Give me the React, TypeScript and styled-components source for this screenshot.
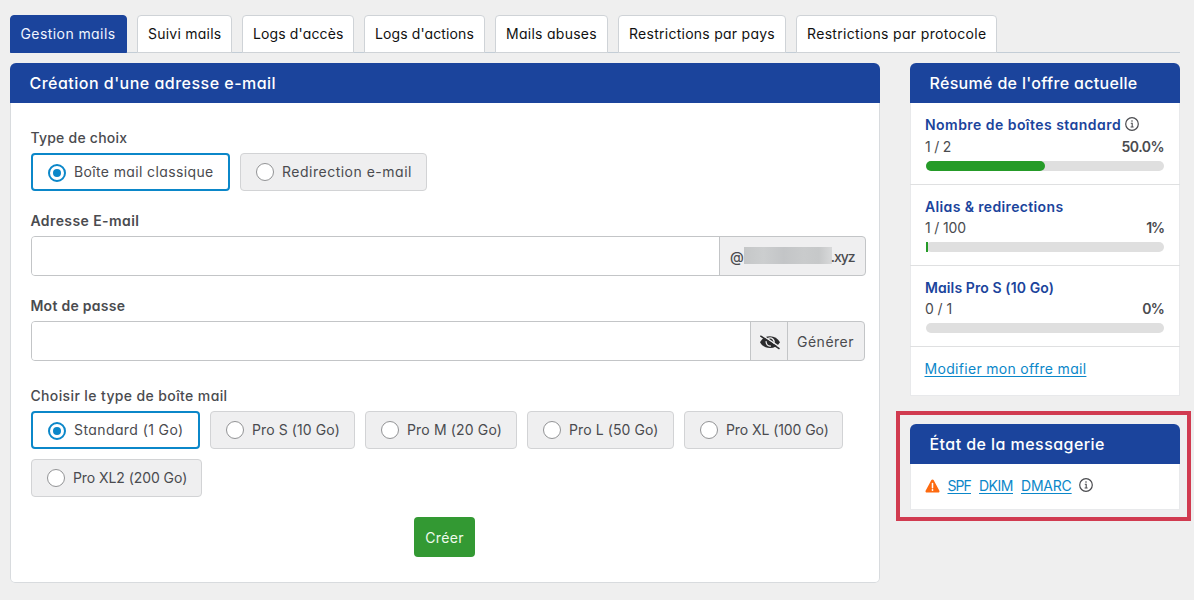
import React from 'react';
import styled, { createGlobalStyle, css } from 'styled-components';

const blue = '#1b449c';
const link = '#0b87c9';
const ink = '#4a4b4f';

const GlobalStyle = createGlobalStyle`
  *, *::before, *::after { box-sizing: border-box; }
  body {
    margin: 0;
    background: #efefef;
    color: ${ink};
    font-family: Inter, "Liberation Sans", sans-serif;
    font-size: 14px;
    line-height: 21px;
    font-feature-settings: "cv11";
  }
`;

const Page = styled.div`
  height: 600px;
  padding: 15px 14px 0 10px;
  overflow: hidden;
`;

const Text = styled.span<{ $track?: number }>`
  white-space: nowrap;
  letter-spacing: ${p => p.$track ?? 0}px;
`;

const Tabs = styled.nav`
  display: flex;
  gap: 10px;
  width: 1170px;
  height: 38px;
  border-bottom: 1px solid #c3cdd6;
`;

const Tab = styled.a<{ $active?: boolean; $width: number }>`
  display: flex;
  align-items: center;
  width: ${p => p.$width}px;
  height: 38px;
  padding: 0 0 2px 10px;
  border: 1px solid #cfd3d7;
  border-radius: 4px 4px 0 0;
  background: #fff;
  color: #111;
  ${p => p.$active && css`
    padding-left: 9.5px;
    background: ${blue};
    border-color: ${blue};
    color: #f1f5ff;
  `}
`;

const Columns = styled.div`
  display: flex;
  gap: 16px;
  align-items: flex-start;
  margin-top: 10px;
`;

const Panel = styled.section<{ $height: number; $width: number; $soft?: boolean }>`
  width: ${p => p.$width}px;
  height: ${p => p.$height}px;
  display: flex;
  flex-direction: column;
  background: #fff;
  border-radius: 6px 6px ${p => (p.$soft ? '0 0' : '5px 5px')};
  box-shadow: inset 0 0 0 1px ${p => (p.$soft ? '#e8e9eb' : '#d8dbde')};
`;

const PanelTitle = styled.h2`
  flex: none;
  display: flex;
  align-items: center;
  height: 40px;
  margin: 0;
  padding: 1px 19.5px 0;
  border-radius: 6px 6px 0 0;
  background: ${blue};
  color: #fff;
  font-size: 16px;
  font-weight: 500;
`;

const Form = styled.form`
  display: flex;
  flex-direction: column;
  padding: 24px 14px 0 21px;
`;

const Field = styled.div<{ $gap: number }>`
  display: flex;
  flex-direction: column;
  gap: 5px;
  margin-bottom: ${p => p.$gap}px;
`;

const Label = styled.div<{ $weight: number }>`
  height: 21px;
  margin-left: -0.6px;
  font-weight: ${p => p.$weight};
`;

const Options = styled.div`
  display: flex;
  flex-wrap: wrap;
  gap: 10px;
`;

const Option = styled.label<{ $checked?: boolean; $width: number }>`
  display: flex;
  align-items: flex-start;
  gap: 8px;
  width: ${p => p.$width}px;
  height: 38px;
  padding: 7px 0 0 15px;
  border: 1px solid #d2d3d5;
  border-radius: 4px;
  background: #efeff0;
  ${p => p.$checked && css`
    padding-top: 6px;
    border: 2px solid ${link};
    background: #fff;
  `}
`;

const Radio = styled.span<{ $checked?: boolean }>`
  flex: none;
  display: grid;
  place-items: center;
  width: 18px;
  height: 18px;
  margin-top: 2px;
  border: 1px solid #929395;
  border-radius: 50%;
  background: #fff;
  ${p => p.$checked && css`
    border: 2px solid ${link};
    margin-top: 3px;
    &::after {
      content: '';
      width: 8px;
      height: 8px;
      border-radius: 50%;
      background: ${link};
    }
  `}
`;

const InputGroup = styled.div<{ $width: number }>`
  display: flex;
  width: ${p => p.$width}px;
  height: 40px;
  border: 1px solid #c3c5c7;
  border-radius: 4px;
  background: #efeff0;
  overflow: hidden;
`;

const Input = styled.input`
  flex: 1;
  min-width: 0;
  padding: 0 10px;
  border: 0;
  background: #fff;
  outline: none;
`;

const Addon = styled.span<{ $width: number }>`
  display: flex;
  align-items: center;
  width: ${p => p.$width}px;
  padding: 0 0 0 10px;
  border-left: 1px solid #c3c5c7;
  font-weight: 500;
`;

const Masked = styled.span`
  width: 88px;
  height: 17px;
  margin: -2px -1px 0 0;
  background: linear-gradient(90deg, #c5c7c8, #cccecf 22%, #c3c5c7 45%, #c9cbcc 68%, #c6c8c9 85%, #d8d9da);
`;

const IconAddon = styled.button`
  display: grid;
  place-items: center;
  width: 37px;
  padding: 1px 0 0 1px;
  border: 0;
  border-left: 1px solid #c3c5c7;
  background: none;
  color: #2b2b2d;
`;

const Generate = styled.button`
  width: 77px;
  padding: 0 0 0 9px;
  border: 0;
  border-left: 1px solid #c3c5c7;
  background: none;
  color: ${ink};
  font: inherit;
  font-feature-settings: inherit;
  text-align: left;
`;

const Submit = styled.button`
  align-self: center;
  width: 61px;
  height: 40px;
  margin-right: 8px;
  padding: 0;
  border: 0;
  border-radius: 4px;
  background: #339933;
  color: #f0fbee;
  font: inherit;
  font-feature-settings: inherit;
`;

const Aside = styled.aside`
  display: flex;
  flex-direction: column;
  gap: 15px;
  padding-left: 14px;
`;

const Quota = styled.div<{ $height: number }>`
  height: ${p => p.$height}px;
  padding: 10px 16px 0 15px;
  border-bottom: 1px solid #dfe0e1;
`;

const QuotaTitle = styled.div<{ $height: number }>`
  display: flex;
  align-items: flex-start;
  gap: 4px;
  height: ${p => p.$height}px;
  line-height: 24px;
  color: ${blue};
  font-weight: 600;

  svg { margin-top: 4px; }
`;

const QuotaNumbers = styled.div`
  display: flex;
  justify-content: space-between;
  height: 21px;

  b { font-weight: 600; }
`;

const Track = styled.div`
  height: 10px;
  margin: 4px 0 0 1px;
  border-radius: 5px;
  background: #dfdfdf;
`;

const Bar = styled.div<{ $round?: boolean }>`
  height: 100%;
  border-radius: ${p => (p.$round ? 5 : 0)}px;
  background: #259b28;
`;

const Link = styled.a`
  color: ${link};
  text-decoration: underline;
  text-underline-offset: 2px;
  text-decoration-thickness: 1px;
`;

const OfferLink = styled.div`
  padding: 11px 14.5px 0;
`;

const Highlight = styled.div`
  width: 295px;
  height: 110px;
  margin-left: -14px;
  padding: 9px 10px;
  border: 4px solid #d13b50;
`;

const StatusRow = styled.div`
  display: flex;
  align-items: flex-start;
  height: 44px;
  padding: 11px 0 0 15px;

  svg { margin-top: 4px; }
  svg:last-child { margin: 3px 0 0 -0.5px; }
  a { margin-right: 8px; }
  svg:first-child { margin-right: 7.5px; }
`;

const InfoIcon = () => (
  <svg width="14" height="14" viewBox="0 0 14 14" fill="none" stroke="#4a4b4f">
    <circle cx="7" cy="7" r="6.3" strokeWidth="1.2" />
    <path d="M5.8 6.2H7.2V9.9M5.6 10H8.6" strokeWidth="1.1" />
    <circle cx="7" cy="4" r=".8" fill="#4a4b4f" stroke="none" />
  </svg>
);

const EyeOffIcon = () => (
  <svg width="20" height="16" viewBox="0 0 20 16">
    <path d="M0 8.2C2.2 4.4 5.7 2.3 10 2.3S17.8 4.4 20 8.2C17.8 12 14.3 14.1 10 14.1S2.2 12 0 8.2Z" fill="currentColor" />
    <path d="M8 4.5A4 4 0 0 1 13.6 9.8M6.2 7.2A4 4 0 0 0 10.8 12" fill="none" stroke="#efeff0" strokeWidth="1.3" />
    <path d="M1.2 .6 20 13.2" stroke="#efeff0" strokeWidth="1.5" />
    <path d="M.3 1.8 19.5 14.8" stroke="currentColor" strokeWidth="1.6" />
  </svg>
);

const WarningIcon = () => (
  <svg width="15" height="14" viewBox="0 0 15 14">
    <path d="M6.4 1.1a1.25 1.25 0 0 1 2.2 0l5.8 10.6A1.25 1.25 0 0 1 13.3 13.5H1.7A1.25 1.25 0 0 1 .6 11.7Z" fill="#fd6a10" />
    <path d="M7.5 4.6V8.8" stroke="#fff" strokeWidth="1.5" strokeLinecap="round" />
    <circle cx="7.5" cy="11" r=".9" fill="#fff" />
  </svg>
);

const tabs = [
  { label: 'Gestion mails', width: 117, track: 0.42 },
  { label: 'Suivi mails', width: 95, track: 0.24 },
  { label: "Logs d'accès", width: 112, track: 0.13 },
  { label: "Logs d'actions", width: 121, track: 0.11 },
  { label: 'Mails abuses', width: 113, track: 0.27 },
  { label: 'Restrictions par pays', width: 168, track: 0.26 },
  { label: 'Restrictions par protocole', width: 201, track: 0.33 },
];

const kinds = [
  { label: 'Boîte mail classique', width: 199, track: 0.37 },
  { label: 'Redirection e-mail', width: 187, track: 0.5 },
];

const sizes = [
  { label: 'Standard (1 Go)', width: 169, track: 0.41 },
  { label: 'Pro S (10 Go)', width: 145, track: 0.1 },
  { label: 'Pro M (20 Go)', width: 152, track: 0.15 },
  { label: 'Pro L (50 Go)', width: 147, track: 0.09 },
  { label: 'Pro XL (100 Go)', width: 159, track: -0.08 },
  { label: 'Pro XL2 (200 Go)', width: 171, track: -0.07 },
];

const quotas = [
  { label: 'Nombre de boîtes standard', track: 0.46, used: '1 / 2', usedTrack: -0.23, rate: '50.0%', rateTrack: -0.51, percent: 50, info: true, height: 82 },
  { label: 'Alias & redirections', track: 0.36, used: '1 / 100', usedTrack: -0.14, rate: '1%', rateTrack: -1.1, percent: 1, info: false, height: 81 },
  { label: 'Mails Pro S (10 Go)', track: 0.1, used: '0 / 1', usedTrack: -0.09, rate: '0%', rateTrack: -0.8, percent: 0, info: false, height: 81 },
];

type Choice = { label: string; width: number; track: number };

const Choices = ({ items }: { items: Choice[] }) => (
  <Options>
    {items.map((item, i) => (
      <Option key={item.label} $checked={i === 0} $width={item.width}>
        <Radio $checked={i === 0} />
        <Text $track={item.track}>{item.label}</Text>
      </Option>
    ))}
  </Options>
);

export default function App() {
  return (
    <Page>
      <GlobalStyle />
      <Tabs>
        {tabs.map((tab, i) => (
          <Tab key={tab.label} $active={i === 0} $width={tab.width}>
            <Text $track={tab.track}>{tab.label}</Text>
          </Tab>
        ))}
      </Tabs>
      <Columns>
        <Panel $width={870} $height={520}>
          <PanelTitle><Text $track={0.48}>Création d'une adresse e-mail</Text></PanelTitle>
          <Form>
            <Field $gap={19}>
              <Label $weight={500}><Text $track={0.24}>Type de choix</Text></Label>
              <Choices items={kinds} />
            </Field>
            <Field $gap={19}>
              <Label $weight={600}><Text $track={0.42}>Adresse E-mail</Text></Label>
              <InputGroup $width={835}>
                <Input type="text" />
                <Addon $width={146}>
                  <Text>@</Text>
                  <Masked />
                  <Text $track={-1}>.xyz</Text>
                </Addon>
              </InputGroup>
            </Field>
            <Field $gap={24}>
              <Label $weight={600}><Text $track={0.28}>Mot de passe</Text></Label>
              <InputGroup $width={834}>
                <Input type="password" />
                <IconAddon type="button"><EyeOffIcon /></IconAddon>
                <Generate type="button"><Text $track={0.5}>Générer</Text></Generate>
              </InputGroup>
            </Field>
            <Field $gap={20}>
              <Label $weight={500}><Text $track={0.38}>Choisir le type de boîte mail</Text></Label>
              <Choices items={sizes} />
            </Field>
            <Submit type="button"><Text $track={0.33}>Créer</Text></Submit>
          </Form>
        </Panel>
        <Aside>
          <Panel $width={270} $height={333} $soft>
            <PanelTitle><Text $track={0.32}>Résumé de l'offre actuelle</Text></PanelTitle>
            {quotas.map((q, i) => (
              <Quota key={q.label} $height={q.height}>
                <QuotaTitle $height={i === 0 ? 23 : 22}>
                  <Text $track={q.track}>{q.label}</Text>
                  {q.info && <InfoIcon />}
                </QuotaTitle>
                <QuotaNumbers>
                  <Text $track={q.usedTrack}>{q.used}</Text>
                  <b><Text $track={q.rateTrack}>{q.rate}</Text></b>
                </QuotaNumbers>
                <Track><Bar $round={q.percent > 5} style={{ width: `${q.percent}%` }} /></Track>
              </Quota>
            ))}
            <OfferLink><Link><Text $track={0.31}>Modifier mon offre mail</Text></Link></OfferLink>
          </Panel>
          <Highlight>
            <Panel $width={270} $height={86} $soft>
              <PanelTitle><Text $track={0.44}>État de la messagerie</Text></PanelTitle>
              <StatusRow>
                <WarningIcon />
                <Link><Text $track={-0.9}>SPF</Text></Link>
                <Link><Text $track={-0.48}>DKIM</Text></Link>
                <Link><Text $track={-0.2}>DMARC</Text></Link>
                <InfoIcon />
              </StatusRow>
            </Panel>
          </Highlight>
        </Aside>
      </Columns>
    </Page>
  );
}
